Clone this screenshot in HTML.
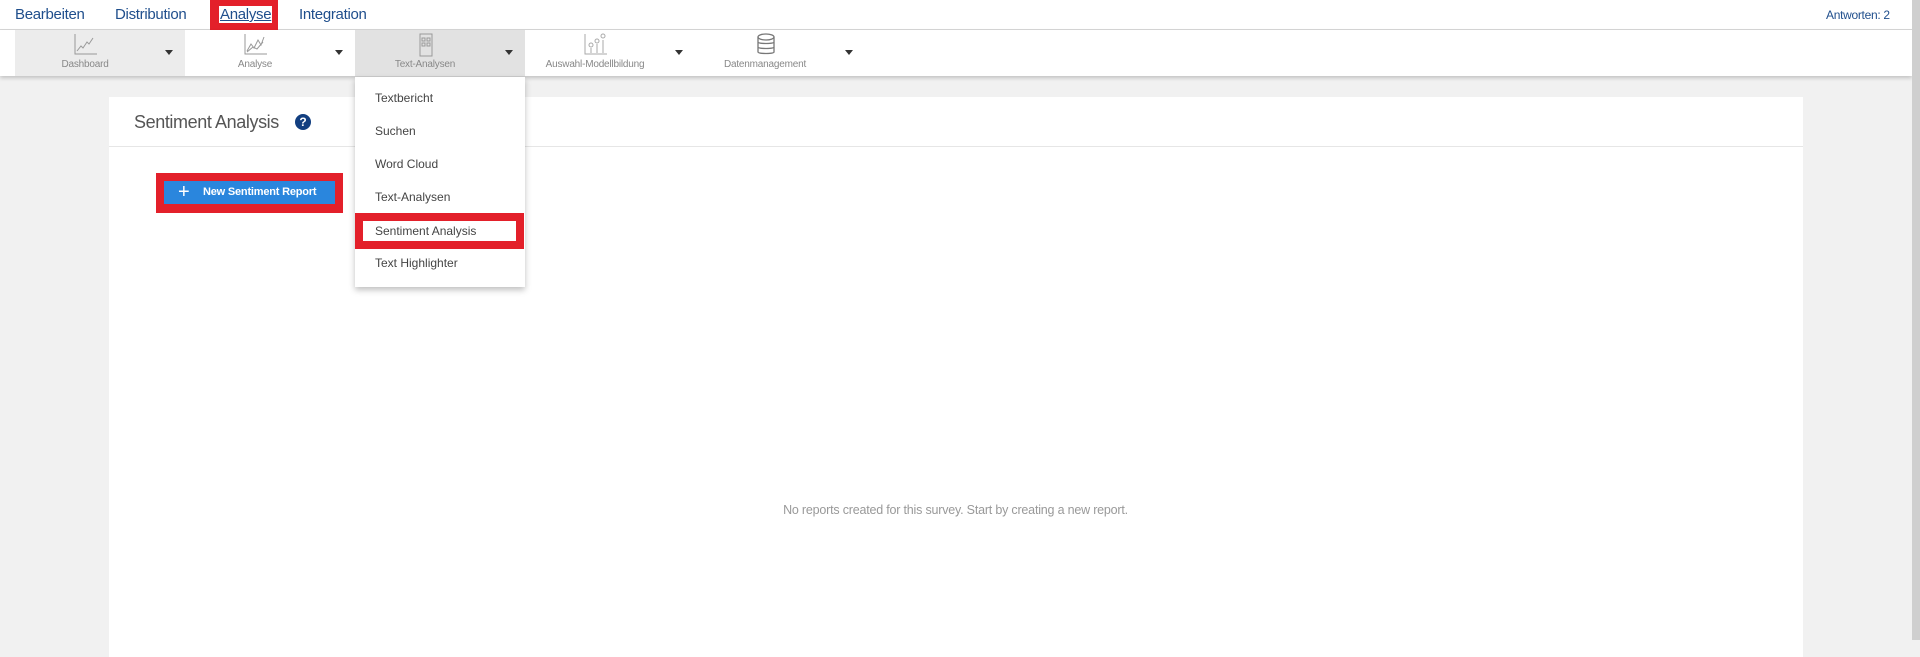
<!DOCTYPE html>
<html><head><meta charset="utf-8"><style>
*{box-sizing:border-box;margin:0;padding:0}
body{width:1920px;height:640px;overflow:hidden;background:#f1f1f1;font-family:"Liberation Sans",sans-serif;position:relative}
.top{position:absolute;left:0;top:0;width:1912px;height:30px;background:#fff;border-bottom:1px solid #d8d8d8}
.top a{position:absolute;top:6px;font-size:15px;color:#1f4e8c;text-decoration:none;letter-spacing:-0.3px}
.tb{position:absolute;left:0;top:30px;width:1912px;height:46px;background:#fff;box-shadow:0 2px 4px rgba(0,0,0,.2)}
.it{position:absolute;top:0;height:46px;width:170px}
.it .lbl{position:absolute;left:0;width:140px;top:29px;text-align:center;font-size:10px;color:#888;letter-spacing:-0.2px}
.it .car{position:absolute;left:150px;top:20px;width:0;height:0;border-left:4px solid transparent;border-right:4px solid transparent;border-top:5px solid #333}
.it svg{position:absolute;left:56px;top:2px}
.sb{position:absolute;left:1912px;top:0;width:8px;height:640px;background:#cfcfcf}
.card{position:absolute;left:109px;top:97px;width:1694px;height:560px;background:#fff}
.card h1{position:absolute;left:25px;top:15px;font-size:18px;font-weight:normal;color:#555;letter-spacing:-0.4px}
.help{position:absolute;left:186px;top:17px;width:16px;height:16px;border-radius:50%;background:#123f80;color:#fff;font-size:12px;font-weight:bold;text-align:center;line-height:16px}
.div{position:absolute;left:0;top:49px;width:100%;height:1px;background:#e6e6e6}
.rb{position:absolute;left:156px;top:173px;width:187px;height:40px;background:#e3202a}
.btn{position:absolute;left:164px;top:181px;width:171px;height:23px;background:#2a86dd;color:#fff;font-size:11px;font-weight:bold;line-height:23px;padding-left:39px;letter-spacing:-0.2px}
.btn span{position:absolute;left:14px;top:0;font-size:20px;font-weight:normal}
.msg{position:absolute;left:0;width:1911px;top:503px;text-align:center;font-size:12.5px;color:#999;letter-spacing:-0.2px}
.dd{position:absolute;left:355px;top:77px;width:170px;height:210px;background:#fff;box-shadow:0 3px 6px rgba(0,0,0,.25)}
.dd div{position:absolute;left:20px;font-size:12px;color:#444}
.hl{position:absolute;left:355px;top:213px;width:169px;height:36px;background:#e3202a}
.hli{position:absolute;left:363px;top:221px;width:153px;height:20px;background:#fff}
</style></head><body>
<div class="top">
<a style="left:15px">Bearbeiten</a>
<a style="left:115px">Distribution</a>
<div style="position:absolute;left:210px;top:0;width:68px;height:30px;background:#e3202a"></div>
<a style="left:219px;background:#fff;text-decoration:underline;padding:0 1px">Analyse</a>
<a style="left:299px">Integration</a>
<a style="left:1826px;font-size:12px;top:8px">Antworten: 2</a>
</div>
<div class="tb">
<div class="it" style="left:15px;background:#ececec;width:170px"><svg width="30" height="26" viewBox="0 0 30 26" fill="none" stroke="#999" stroke-width="1"><path d="M4 2V22H26M6 19L10 14L12 16L16 10L18 12L22 6"/></svg><div class="lbl">Dashboard</div><div class="car"></div></div>
<div class="it" style="left:185px"><svg width="30" height="26" viewBox="0 0 30 26" fill="none" stroke="#999"><path d="M4 2V22H26M6 19L10 12L13 16L17 8L20 13L23 5M6 20L12 15L16 17L22 10"/></svg><div class="lbl">Analyse</div><div class="car"></div></div>
<div class="it" style="left:355px;background:#e2e2e2"><svg width="30" height="26" viewBox="0 0 30 26" fill="none" stroke="#999"><rect x="9" y="2" width="12" height="22"/><rect x="11" y="6" width="3" height="3"/><rect x="16" y="6" width="3" height="3"/><rect x="11" y="11" width="3" height="3"/><rect x="16" y="11" width="3" height="3"/></svg><div class="lbl">Text-Analysen</div><div class="car"></div></div>
<div class="it" style="left:525px"><svg width="30" height="26" viewBox="0 0 30 26" fill="none" stroke="#aaa"><path d="M4 2V22H26M10 21V16M16 21V12M22 21V8"/><circle cx="10" cy="13" r="2"/><circle cx="16" cy="9" r="2"/><circle cx="22" cy="4" r="2"/></svg><div class="lbl">Auswahl-Modellbildung</div><div class="car"></div></div>
<div class="it" style="left:695px"><svg width="30" height="26" viewBox="0 0 30 26" fill="none" stroke="#777" stroke-width="1.3"><ellipse cx="15" cy="5" rx="8" ry="3"/><path d="M7 5V20C7 22 23 22 23 20V5M7 10C7 12 23 12 23 10M7 15C7 17 23 17 23 15"/></svg><div class="lbl">Datenmanagement</div><div class="car"></div></div>
</div>
<div class="sb"></div>
<div class="card"><h1>Sentiment Analysis</h1><div class="help">?</div><div class="div"></div></div>
<div class="rb"></div>
<div class="btn"><span>+</span>New Sentiment Report</div>
<div class="msg">No reports created for this survey. Start by creating a new report.</div>
<div class="dd">
<div style="top:14px">Textbericht</div>
<div style="top:47px">Suchen</div>
<div style="top:80px">Word Cloud</div>
<div style="top:113px">Text-Analysen</div>
<div style="top:179px">Text Highlighter</div>
</div>
<div class="hl"></div><div class="hli"></div>
<div style="position:absolute;left:375px;top:224px;font-size:12px;color:#444">Sentiment Analysis</div>
</body></html>
